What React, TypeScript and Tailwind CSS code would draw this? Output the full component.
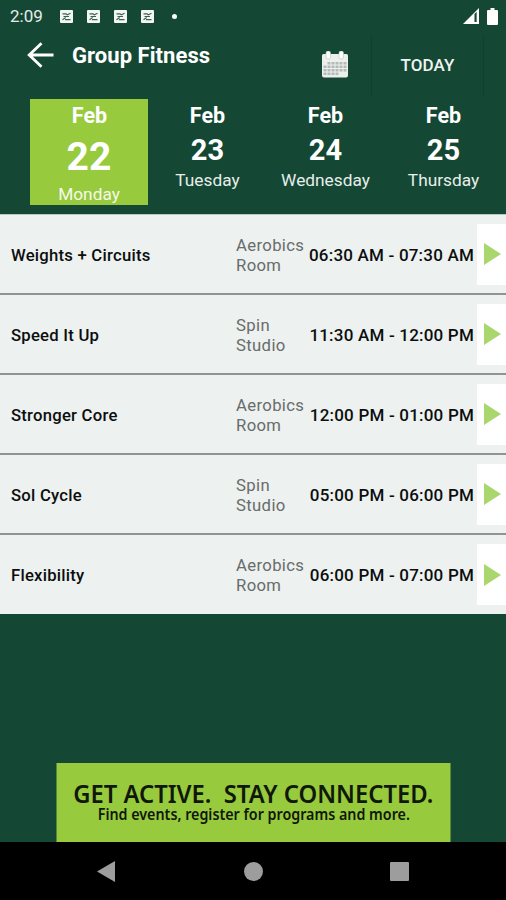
interface Day {
  month: string;
  date: number;
  weekday: string;
}

interface FitnessClass {
  name: string;
  room: [string, string];
  time: string;
}

const days: Day[] = [
  { month: "Feb", date: 22, weekday: "Monday" },
  { month: "Feb", date: 23, weekday: "Tuesday" },
  { month: "Feb", date: 24, weekday: "Wednesday" },
  { month: "Feb", date: 25, weekday: "Thursday" },
];

const classes: FitnessClass[] = [
  { name: "Weights + Circuits", room: ["Aerobics", "Room"], time: "06:30 AM - 07:30 AM" },
  { name: "Speed It Up", room: ["Spin", "Studio"], time: "11:30 AM - 12:00 PM" },
  { name: "Stronger Core", room: ["Aerobics", "Room"], time: "12:00 PM - 01:00 PM" },
  { name: "Sol Cycle", room: ["Spin", "Studio"], time: "05:00 PM - 06:00 PM" },
  { name: "Flexibility", room: ["Aerobics", "Room"], time: "06:00 PM - 07:00 PM" },
];

function NotificationIcon() {
  return (
    <svg width="13" height="13" viewBox="0 0 13 13">
      <rect width="13" height="13" rx="1" fill="#f3f7f4" />
      <path d="M2.500 3.800h3.500l1.200 1M7 5l3.500-1.800M3.500 6.500h5.500M2.500 9.800l3.200-2.200M5 9.600h5.500" stroke="#3d5f50" strokeWidth="1.200" fill="none" />
    </svg>
  );
}

function StatusBar() {
  return (
    <div className="flex h-8 items-center pl-[10px] pr-[8px] text-white">
      <span className="w-[50px] text-[17px] leading-8 text-[#e5ece8]">2:09</span>
      <div className="flex gap-[14px]">
        <NotificationIcon />
        <NotificationIcon />
        <NotificationIcon />
        <NotificationIcon />
      </div>
      <span className="ml-[18px] size-[5px] rounded-full bg-white" />
      <svg className="ml-auto" width="16" height="16" viewBox="0 0 17 17">
        <path d="M0 17L17 0v17z" fill="#fff" />
        <path d="M12.200 6.500l2.300-2.500V15h-2.300z" fill="#144834" />
      </svg>
      <svg className="ml-[8px]" width="11" height="17" viewBox="0 0 11 17">
        <path d="M3.500 0h4v2H10a1 1 0 0 1 1 1v13a1 1 0 0 1-1 1H1a1 1 0 0 1-1-1V3a1 1 0 0 1 1-1h2.500z" fill="#fff" />
      </svg>
    </div>
  );
}

function CalendarIcon() {
  const cells = [0, 1, 2, 3, 4, 5];
  return (
    <svg width="26" height="27" viewBox="0 0 26 27">
      <path d="M1.500 3h23a1.500 1.500 0 0 1 1.500 1.500v20a2 2 0 0 1-2 2H2a2 2 0 0 1-2-2v-20A1.500 1.500 0 0 1 1.500 3z" fill="#edefee" />
      <rect x="4" y="0" width="4.500" height="8" rx="2" fill="#fff" stroke="#b4bfba" strokeWidth=".6" />
      <rect x="17" y="0" width="4.500" height="8" rx="2" fill="#fff" stroke="#b4bfba" strokeWidth=".6" />
      {[11, 14.5, 18, 21.500].map((y, row) =>
        cells
          .filter((col) => (row > 0 || col > 0) && (row < 3 || col < 4))
          .map((col) => <rect key={`${y}-${col}`} x={1.5 + col * 4} y={y} width="3" height="2.500" fill="#b4bab7" />),
      )}
    </svg>
  );
}

function Header() {
  return (
    <div className="flex h-[67px] items-start pl-[27px]">
      <svg className="mt-[10px]" width="27" height="26" viewBox="0 0 27 26" fill="none" stroke="#fff" strokeWidth="2.800">
        <path d="M14.500 1.200L2.200 13l12.300 11.800M2.500 13H26.500" />
      </svg>
      <h1 className="ml-[18px] mt-[10px] w-[250px] whitespace-nowrap text-[22px] font-bold leading-7 tracking-[0.050px] text-white">
        Group Fitness
      </h1>
      <div className="mt-[19px] w-[49px]">
        <CalendarIcon />
      </div>
      <div className="mt-1 flex h-[60px] w-[113px] items-center justify-center border-x border-[#113f2d] text-[17px] font-medium tracking-[0.150px] text-[#f0f4f2]">
        TODAY
      </div>
    </div>
  );
}

function DayTab({ day, selected }: { day: Day; selected: boolean }) {
  return (
    <div
      className={`flex h-[106px] w-[118px] shrink-0 flex-col items-center text-white ${selected ? "bg-[#97ca3d]" : ""}`}
    >
      <span className="mt-[3px] pl-[1px] text-[21.500px] font-bold leading-7">{day.month}</span>
      <span className={selected ? "text-[39px] font-bold leading-[54px]" : "pl-[1px] text-[29px] font-bold leading-[41px]"}>
        {day.date}
      </span>
      <span
        className={
          selected ? "text-[17.300px] leading-5 text-[#f4faea]" : "pl-[1px] text-[17.300px] leading-[19px] text-[#e8eeeb]"
        }
      >
        {day.weekday}
      </span>
    </div>
  );
}

function ClassRow({ item }: { item: FitnessClass }) {
  return (
    <div className="flex h-20 items-center border-b-2 border-[#8f9492] bg-[#edf1f0] pl-[11px] last:h-[79px] last:border-b-0">
      <span className="w-[225px] pt-[3px] text-[16.700px] font-medium tracking-[0.230px] text-[#0c0e0e]">{item.name}</span>
      <span className="w-[70px] whitespace-nowrap pt-[3px] text-[16.700px] leading-5 tracking-[0.350px] text-[#686c6b]">
        {item.room[0]}
        <br />
        {item.room[1]}
      </span>
      <span className="flex w-[168px] justify-end whitespace-nowrap pt-[3px] text-[17px] font-medium tracking-[0.200px] text-[#0c0e0e]">
        {item.time}
      </span>
      <div className="ml-[3px] flex h-[61px] w-[29px] items-center bg-white pl-[7px]">
        <svg width="17" height="22" viewBox="0 0 18 22" preserveAspectRatio="none">
          <path d="M0 0l18 11L0 22z" fill="#a9d66d" />
        </svg>
      </div>
    </div>
  );
}

function Banner() {
  return (
    <div className="mx-auto mt-auto flex h-[79px] w-[394px] translate-x-[0.500px] flex-col items-center whitespace-nowrap bg-[#97ca3d] pt-[16px] font-['Noto_Sans','Open_Sans',sans-serif] text-[#10180a]">
      <p className="origin-center scale-x-[0.915] whitespace-pre text-[26px] font-semibold leading-7">
        GET ACTIVE.{"  "}STAY CONNECTED.
      </p>
      <p className="-mt-px origin-center scale-x-[0.922] text-[15.500px] font-semibold leading-4">
        Find events, register for programs and more.
      </p>
    </div>
  );
}

function NavBar() {
  return (
    <div className="flex h-[58px] items-center justify-between bg-black pl-[97px] pr-[97px]">
      <svg width="18" height="21" viewBox="0 0 18 21">
        <path d="M18 0v21L0 10.500z" fill="#9d9d9d" />
      </svg>
      <span className="ml-[2px] size-[19px] rounded-full bg-[#9d9d9d]" />
      <span className="size-[19px] rounded-[1px] bg-[#9d9d9d]" />
    </div>
  );
}

export default function App() {
  return (
    <div className="flex h-[900px] w-[506px] flex-col overflow-hidden bg-[#144834] font-[Roboto,sans-serif]">
      <StatusBar />
      <Header />
      <div className="flex h-[115px] overflow-hidden pl-[30px]">
        {days.map((day, i) => (
          <DayTab key={day.date} day={day} selected={i === 0} />
        ))}
      </div>
      <div className="border-t border-[#b9c7c1]">
        {classes.map((item) => (
          <ClassRow key={item.name} item={item} />
        ))}
      </div>
      <Banner />
      <NavBar />
    </div>
  );
}
